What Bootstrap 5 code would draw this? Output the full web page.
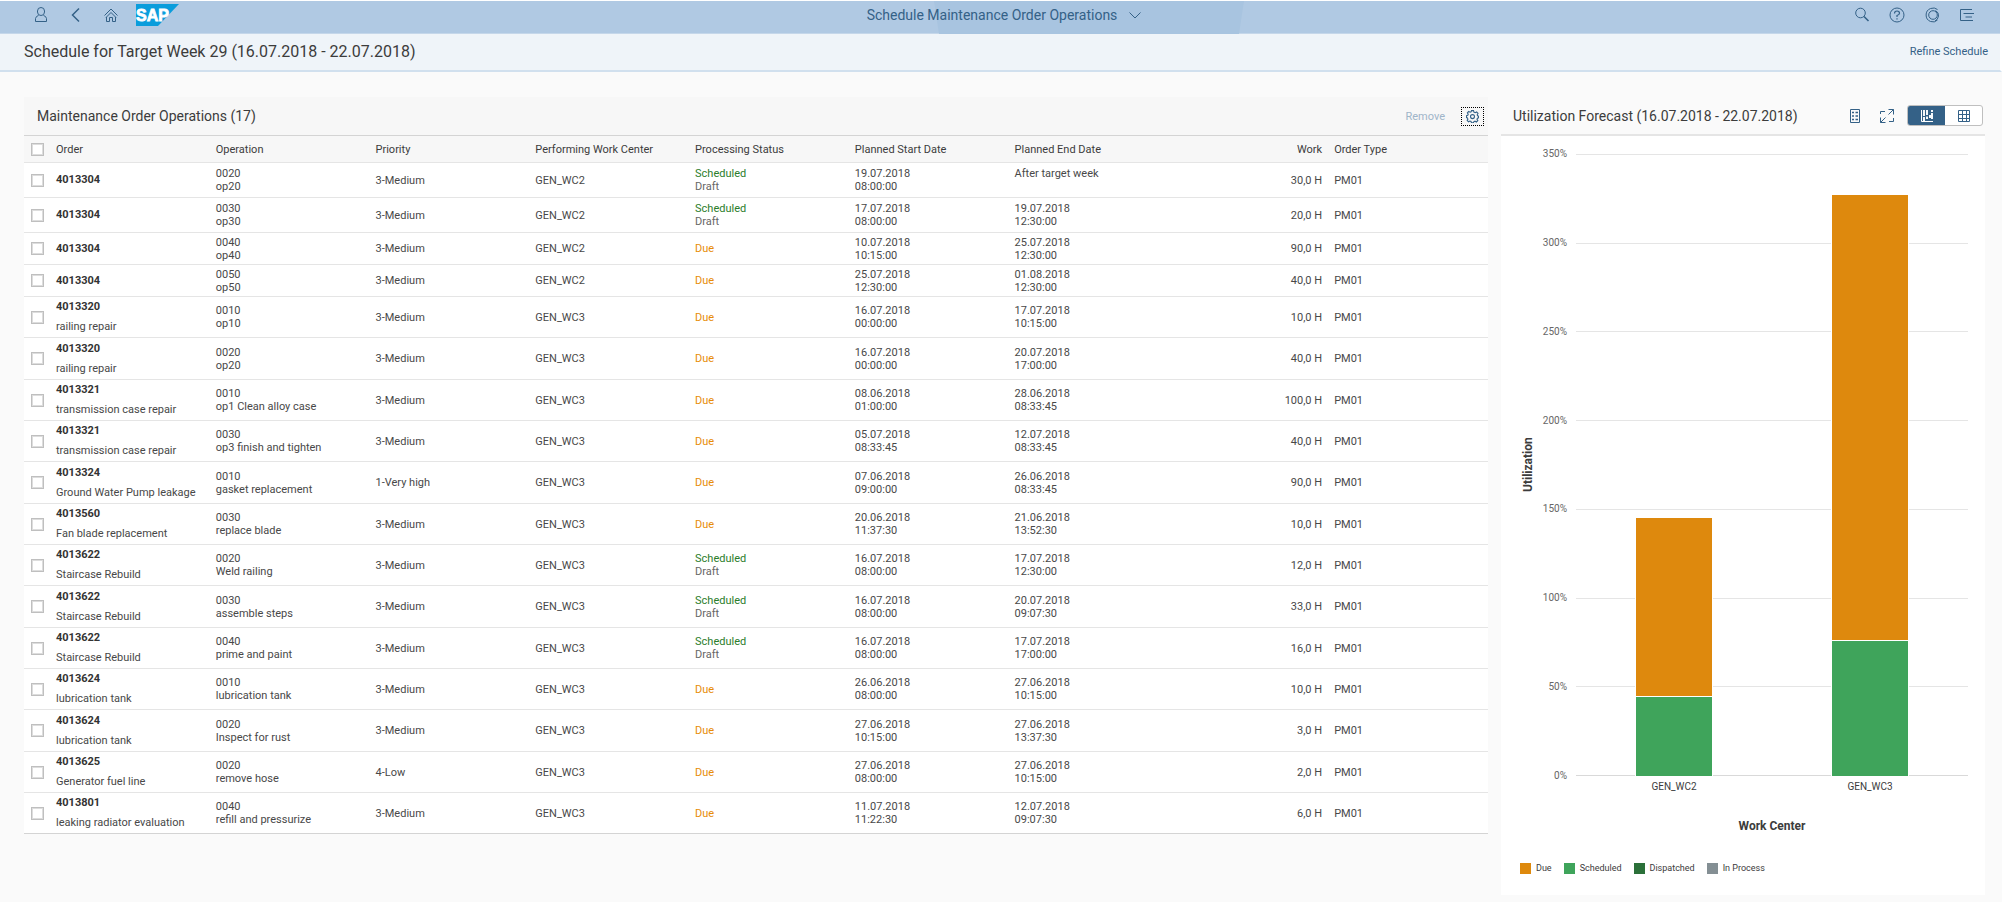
<!DOCTYPE html>
<html lang="en">
<head>
<meta charset="utf-8">
<meta name="viewport" content="width=device-width, initial-scale=1">
<title>Schedule Maintenance Order Operations</title>
<link href="https://cdn.jsdelivr.net/npm/bootstrap@5.3.0/dist/css/bootstrap.min.css" rel="stylesheet">
<style>
  :root { --brand: #346187; --ink: #3c3c3c; --line: #e5e5e5; --due: #de890d; --sched: #3fa45b; --disp: #2b7039; --proc: #848f94; }
  body { font-family: Roboto, "Open Sans", sans-serif; font-size: 11px; line-height: 13px; color: var(--ink); background: #fafafa; }
  button { font: inherit; color: inherit; border: 0; background: none; padding: 0; }
  svg { display: block; }
  .shell { height: 34px; padding: 0 24px 5px 32px; background: #b0c9e3; border: solid #fff; border-width: 1px 2px 0 0; box-shadow: inset 0 -1px #c5d7ea; color: var(--brand); }
  .shell-side { flex: 1 1 0; }
  .tools-start { gap: 20px; }
  .tools-end { gap: 17px; }
  .shell-shape { top: 0; left: 46.7%; width: 310px; height: 100%; background: #a8c4e0; clip-path: polygon(0 0, 100% 0, 305px 100%, 5px 100%); }
  .shell-title { font-size: 14px; line-height: 20px; gap: 12px; }
  .page-head { height: 38px; padding: 0 12px 0 24px; background: #eff4f9; border-bottom: 2px solid #d1e0ee; border-right: 2px solid #fff; }
  .page-head h1 { font-size: 16px; line-height: 20px; font-weight: 400; }
  .page-head a { font-size: 11px; line-height: 16px; color: var(--brand); }
  main { padding: 25px 17px 7px 24px; gap: 13px; }
  h2 { font-size: 14px; line-height: 20px; font-weight: 400; }
  .ops { flex: 1464 1 0; }
  .util { flex: 484 1 0; }
  .ops-bar { height: 39px; padding: 0 4px 0 13px; background: #f7f7f7; border-bottom: 1px solid #d4d4d4; }
  .off { color: #9fb5c9; }
  .gear { border: 1px dotted #000; padding: 2px 4px; color: var(--brand); }
  .ops-table { table-layout: fixed; width: 100%; background: #fff; border-collapse: separate; border-spacing: 0; }
  .ops-table th { font-weight: 400; height: 27px; background: #f7f7f7; }
  .ops-table th, .ops-table td { padding: 0 6px; border-bottom: 1px solid var(--line); vertical-align: middle; white-space: nowrap; }
  .ops-table td { height: 41px; color: #484848; }
  .ops-table tr:nth-child(3n) td { height: 42px; }
  .ops-table tr.tall td { height: 35px; }
  .ops-table tr.flat td { height: 32px; }
  .ops-table tr:last-child td { border-bottom-color: #d4d4d4; }
  .ops-table .pick-col { width: 26px; }
  .pick { appearance: none; display: block; width: 13px; height: 13px; margin: 0 0 0 1px; border: 1px solid #bfbfbf; box-shadow: inset 0 0 0 1px #ddd; background: #fff; border-radius: 0; }
  .pick:checked { background: var(--brand); }
  .ops-table b { display: block; line-height: 20px; color: #333; }
  .note { display: block; line-height: 20px; }
  .draft { color: #666; }
  .is-sched { color: #2b7d2b; }
  .is-due { color: #e78c07; }
  .util-bar { height: 39px; padding: 0 2px 0 12px; border-bottom: 2px solid #e5e5e5; }
  .util-tools { color: var(--brand); gap: 20px; }
  .seg { width: 76px; height: 21px; border: 1px solid #bfbfbf; border-radius: 3px; overflow: hidden; margin-left: -7px; background: #fff; }
  .seg button { flex: 1 1 0; display: flex; align-items: center; justify-content: center; }
  .seg .on { background: var(--brand); color: #fff; }
  .chart { background: #fff; padding: 18px 17px 21px 19px; font-size: 10px; line-height: 12px; }
  .axis-name { font-size: 12px; line-height: 16px; font-weight: 700; }
  .y-name { writing-mode: vertical-rl; transform: rotate(180deg); text-align: center; }
  .y-ticks { width: 31px; margin: -6px 9px -6px 0; color: #666; text-align: right; }
  .plot { display: grid; }
  .plot > * { grid-area: 1 / 1; }
  .grid-lines > div { flex: 1 1 0; border-top: 1px solid var(--line); }
  .grid-lines > div:last-child { border-bottom: 1px solid #d9d9d9; }
  .stack { width: 40%; }
  .stack > div { border: solid #fff; border-width: 1px 1px 0; }
  .x-part { margin-left: 56px; }
  .x-ticks { margin-top: 5px; }
  .x-name { margin-top: 25px; }
  .legend-row { margin-top: 28px; gap: 12px; font-size: 9px; line-height: 12px; }
  .key { width: 11px; height: 11px; margin-right: 5px; }
  .c-due { background: var(--due); } .c-sched { background: var(--sched); } .c-disp { background: var(--disp); } .c-proc { background: var(--proc); }
</style>
</head>
<body class="d-flex flex-column min-vh-100">
<header class="shell position-relative d-flex align-items-center">
  <div class="shell-shape position-absolute"></div>
  <div class="shell-side tools-start d-flex align-items-center position-relative">
    <button type="button" aria-label="User"><svg width="18" height="18" viewBox="0 0 18 18" fill="none" stroke="currentColor"><rect x="5.500" y="1.500" width="7" height="8" rx="3.500"/><path d="M6.500 9.500Q4 10 3.500 12.500V15.500H14.500V12.500Q14 10 11.500 9.500"/></svg></button>
    <button type="button" aria-label="Back"><svg width="12" height="18" viewBox="0 0 12 18" fill="none" stroke="currentColor" stroke-width="1.500"><path d="M9 2.500L2.500 9L9 15.500"/></svg></button>
    <div class="d-flex align-items-center gap-3">
      <button type="button" aria-label="Home"><svg width="18" height="18" viewBox="0 0 18 18" fill="none" stroke="currentColor"><path d="M2.500 9.500L9 3L15.500 9.500M4.500 11V15.500H7.500V11.500H10.500V15.500H13.500V11M4 11.500L9 6.500L14 11.500"/></svg></button>
      <svg width="43" height="22" viewBox="0 0 43 22" role="img" aria-label="SAP"><path d="M0 0H43L22 22H0Z" fill="#0a9ddc"/><text x="0" y="17" font-family="Liberation Sans, sans-serif" font-size="16" font-weight="700" fill="#fff" stroke="#fff" stroke-width=".8">SAP</text></svg>
    </div>
  </div>
  <button type="button" class="shell-title d-flex align-items-center position-relative">Schedule Maintenance Order Operations <svg width="12" height="8" viewBox="0 0 12 8" fill="none" stroke="currentColor"><path d="M.5 1.500L6 7L11.500 1.500"/></svg></button>
  <div class="shell-side tools-end d-flex align-items-center justify-content-end position-relative">
    <button type="button" aria-label="Search"><svg width="18" height="18" viewBox="0 0 18 18" fill="none" stroke="currentColor"><circle cx="7.500" cy="7" r="4.800"/><path d="M11 10.500L15.500 15" stroke-width="1.600"/></svg></button>
    <button type="button" aria-label="Help"><svg width="18" height="18" viewBox="0 0 18 18" fill="none" stroke="currentColor"><circle cx="9" cy="9" r="7"/><path d="M6.500 7.500Q6.500 5 9 5T11.500 7.200Q11.500 8.500 9 9.500V11M9 12.200V13.500" stroke-width="1.200"/></svg></button>
    <button type="button" aria-label="Assistant"><svg width="18" height="18" viewBox="0 0 18 18" fill="none" stroke="currentColor"><path d="M14.500 3.500Q11.500 1 7.500 2.500A7 7 0 0 0 7.500 15.500Q11.500 17 14.500 14"/><circle cx="10" cy="9" r="4.300"/><path d="M12.500 4.500Q16 6.500 15.500 10T12 15"/></svg></button>
    <button type="button" aria-label="Notifications"><svg width="18" height="18" viewBox="0 0 18 18" fill="none" stroke="currentColor"><path d="M14 3.500H2.500V14.500H15M5.500 7.500H16M7.500 11H14"/></svg></button>
  </div>
</header>
<section class="page-head d-flex align-items-center justify-content-between">
  <h1 class="m-0">Schedule for Target Week 29 (16.07.2018 - 22.07.2018)</h1>
  <a href="#" class="text-decoration-none">Refine Schedule</a>
</section>
<main class="d-flex flex-grow-1">
  <section class="ops align-self-start">
    <div class="ops-bar d-flex align-items-center">
      <h2 class="m-0 me-auto">Maintenance Order Operations (17)</h2>
      <button type="button" class="off me-3" disabled>Remove</button>
      <button type="button" class="gear" aria-label="Settings"><svg width="13" height="13" viewBox="0 0 13 13" fill="none" stroke="currentColor" stroke-width="1.100"><path d="M5.500 .6h2l.4 1.500 1.300.6L10.600 2 12 3.400l-.8 1.400.4 1 1 .4v1.600l-1.100.3-.5 1.200.8 1.300-1.400 1.400-1.400-.8-1.100.4-.4 1.100h-2L5 11.500l-1-.5-1.500.8-1.300-1.400.7-1.300-.5-1.200L.5 7.600V5.700l1.200-.4.5-1.100-.8-1.400 1.300-1.300 1.400.7 1-.4z"/><circle cx="6.500" cy="6.600" r="2"/></svg></button>
    </div>
    <table class="ops-table">
      <thead><tr><th class="pick-col"><input type="checkbox" class="pick" aria-label="Select all"></th><th>Order</th><th>Operation</th><th>Priority</th><th>Performing Work Center</th><th>Processing Status</th><th>Planned Start Date</th><th>Planned End Date</th><th class="text-end">Work</th><th>Order Type</th></tr></thead>
      <tbody>
        <tr class="tall"><td><input type="checkbox" class="pick" aria-label="Select 4013304 0020"></td><td><b>4013304</b></td><td>0020<br>op20</td><td>3-Medium</td><td>GEN_WC2</td><td><span class="is-sched">Scheduled</span><br><span class="draft">Draft</span></td><td>19.07.2018<br>08:00:00</td><td>After target week<br>&nbsp;</td><td class="text-end">30,0 H</td><td>PM01</td></tr>
        <tr class="tall"><td><input type="checkbox" class="pick" aria-label="Select 4013304 0030"></td><td><b>4013304</b></td><td>0030<br>op30</td><td>3-Medium</td><td>GEN_WC2</td><td><span class="is-sched">Scheduled</span><br><span class="draft">Draft</span></td><td>17.07.2018<br>08:00:00</td><td>19.07.2018<br>12:30:00</td><td class="text-end">20,0 H</td><td>PM01</td></tr>
        <tr class="flat"><td><input type="checkbox" class="pick" aria-label="Select 4013304 0040"></td><td><b>4013304</b></td><td>0040<br>op40</td><td>3-Medium</td><td>GEN_WC2</td><td><span class="is-due">Due</span></td><td>10.07.2018<br>10:15:00</td><td>25.07.2018<br>12:30:00</td><td class="text-end">90,0 H</td><td>PM01</td></tr>
        <tr class="flat"><td><input type="checkbox" class="pick" aria-label="Select 4013304 0050"></td><td><b>4013304</b></td><td>0050<br>op50</td><td>3-Medium</td><td>GEN_WC2</td><td><span class="is-due">Due</span></td><td>25.07.2018<br>12:30:00</td><td>01.08.2018<br>12:30:00</td><td class="text-end">40,0 H</td><td>PM01</td></tr>
        <tr><td><input type="checkbox" class="pick" aria-label="Select 4013320 0010"></td><td><b>4013320</b><span class="note">railing repair</span></td><td>0010<br>op10</td><td>3-Medium</td><td>GEN_WC3</td><td><span class="is-due">Due</span></td><td>16.07.2018<br>00:00:00</td><td>17.07.2018<br>10:15:00</td><td class="text-end">10,0 H</td><td>PM01</td></tr>
        <tr><td><input type="checkbox" class="pick" aria-label="Select 4013320 0020"></td><td><b>4013320</b><span class="note">railing repair</span></td><td>0020<br>op20</td><td>3-Medium</td><td>GEN_WC3</td><td><span class="is-due">Due</span></td><td>16.07.2018<br>00:00:00</td><td>20.07.2018<br>17:00:00</td><td class="text-end">40,0 H</td><td>PM01</td></tr>
        <tr><td><input type="checkbox" class="pick" aria-label="Select 4013321 0010"></td><td><b>4013321</b><span class="note">transmission case repair</span></td><td>0010<br>op1 Clean alloy case</td><td>3-Medium</td><td>GEN_WC3</td><td><span class="is-due">Due</span></td><td>08.06.2018<br>01:00:00</td><td>28.06.2018<br>08:33:45</td><td class="text-end">100,0 H</td><td>PM01</td></tr>
        <tr><td><input type="checkbox" class="pick" aria-label="Select 4013321 0030"></td><td><b>4013321</b><span class="note">transmission case repair</span></td><td>0030<br>op3 finish and tighten</td><td>3-Medium</td><td>GEN_WC3</td><td><span class="is-due">Due</span></td><td>05.07.2018<br>08:33:45</td><td>12.07.2018<br>08:33:45</td><td class="text-end">40,0 H</td><td>PM01</td></tr>
        <tr><td><input type="checkbox" class="pick" aria-label="Select 4013324 0010"></td><td><b>4013324</b><span class="note">Ground Water Pump leakage</span></td><td>0010<br>gasket replacement</td><td>1-Very high</td><td>GEN_WC3</td><td><span class="is-due">Due</span></td><td>07.06.2018<br>09:00:00</td><td>26.06.2018<br>08:33:45</td><td class="text-end">90,0 H</td><td>PM01</td></tr>
        <tr><td><input type="checkbox" class="pick" aria-label="Select 4013560 0030"></td><td><b>4013560</b><span class="note">Fan blade replacement</span></td><td>0030<br>replace blade</td><td>3-Medium</td><td>GEN_WC3</td><td><span class="is-due">Due</span></td><td>20.06.2018<br>11:37:30</td><td>21.06.2018<br>13:52:30</td><td class="text-end">10,0 H</td><td>PM01</td></tr>
        <tr><td><input type="checkbox" class="pick" aria-label="Select 4013622 0020"></td><td><b>4013622</b><span class="note">Staircase Rebuild</span></td><td>0020<br>Weld railing</td><td>3-Medium</td><td>GEN_WC3</td><td><span class="is-sched">Scheduled</span><br><span class="draft">Draft</span></td><td>16.07.2018<br>08:00:00</td><td>17.07.2018<br>12:30:00</td><td class="text-end">12,0 H</td><td>PM01</td></tr>
        <tr><td><input type="checkbox" class="pick" aria-label="Select 4013622 0030"></td><td><b>4013622</b><span class="note">Staircase Rebuild</span></td><td>0030<br>assemble steps</td><td>3-Medium</td><td>GEN_WC3</td><td><span class="is-sched">Scheduled</span><br><span class="draft">Draft</span></td><td>16.07.2018<br>08:00:00</td><td>20.07.2018<br>09:07:30</td><td class="text-end">33,0 H</td><td>PM01</td></tr>
        <tr><td><input type="checkbox" class="pick" aria-label="Select 4013622 0040"></td><td><b>4013622</b><span class="note">Staircase Rebuild</span></td><td>0040<br>prime and paint</td><td>3-Medium</td><td>GEN_WC3</td><td><span class="is-sched">Scheduled</span><br><span class="draft">Draft</span></td><td>16.07.2018<br>08:00:00</td><td>17.07.2018<br>17:00:00</td><td class="text-end">16,0 H</td><td>PM01</td></tr>
        <tr><td><input type="checkbox" class="pick" aria-label="Select 4013624 0010"></td><td><b>4013624</b><span class="note">lubrication tank</span></td><td>0010<br>lubrication tank</td><td>3-Medium</td><td>GEN_WC3</td><td><span class="is-due">Due</span></td><td>26.06.2018<br>08:00:00</td><td>27.06.2018<br>10:15:00</td><td class="text-end">10,0 H</td><td>PM01</td></tr>
        <tr><td><input type="checkbox" class="pick" aria-label="Select 4013624 0020"></td><td><b>4013624</b><span class="note">lubrication tank</span></td><td>0020<br>Inspect for rust</td><td>3-Medium</td><td>GEN_WC3</td><td><span class="is-due">Due</span></td><td>27.06.2018<br>10:15:00</td><td>27.06.2018<br>13:37:30</td><td class="text-end">3,0 H</td><td>PM01</td></tr>
        <tr><td><input type="checkbox" class="pick" aria-label="Select 4013625 0020"></td><td><b>4013625</b><span class="note">Generator fuel line</span></td><td>0020<br>remove hose</td><td>4-Low</td><td>GEN_WC3</td><td><span class="is-due">Due</span></td><td>27.06.2018<br>08:00:00</td><td>27.06.2018<br>10:15:00</td><td class="text-end">2,0 H</td><td>PM01</td></tr>
        <tr><td><input type="checkbox" class="pick" aria-label="Select 4013801 0040"></td><td><b>4013801</b><span class="note">leaking radiator evaluation</span></td><td>0040<br>refill and pressurize</td><td>3-Medium</td><td>GEN_WC3</td><td><span class="is-due">Due</span></td><td>11.07.2018<br>11:22:30</td><td>12.07.2018<br>09:07:30</td><td class="text-end">6,0 H</td><td>PM01</td></tr>
      </tbody>
    </table>
  </section>
  <section class="util d-flex flex-column">
    <div class="util-bar d-flex align-items-center">
      <h2 class="m-0 me-auto">Utilization Forecast (16.07.2018 - 22.07.2018)</h2>
      <div class="util-tools d-flex align-items-center">
        <button type="button" aria-label="Legend"><svg width="10" height="14" viewBox="0 0 10 14" fill="none" stroke="currentColor"><path d="M.5 .5H9.500V13.500H.5Z"/><path d="M2 3.500H4M5.500 3.500H8M2 7H4M5.500 7H8M2 10.500H4M5.500 10.500H8" stroke-width="1.500"/></svg></button>
        <button type="button" aria-label="Full screen"><svg width="14" height="14" viewBox="0 0 14 14" fill="none" stroke="currentColor"><path d="M8.500 .5H13.500V5.500M13.500 .5L8.500 5.500M.5 8.500V13.500H5.500M.5 13.500L5.500 8.500M.5 5V2.500H5M13.500 9V12.500H9"/></svg></button>
        <div class="seg d-flex">
          <button type="button" class="on" aria-label="Chart view"><svg width="12" height="12" viewBox="0 0 12 12" fill="none" stroke="currentColor"><path d="M.5 0V11.500H12"/><path d="M3 0V6M3 7V11M6 0V5M6 6.500V9M9 5V8M11 0V2M11 3V9" stroke-width="1.900"/></svg></button>
          <button type="button" aria-label="Table view"><svg width="12" height="12" viewBox="0 0 12 12" fill="none" stroke="currentColor"><path d="M.5 .5H11.500V11.500H.5ZM.5 4.500H11.500M.5 8.500H11.500M4.500 .5V11.500M8.500 .5V11.500"/></svg></button>
        </div>
      </div>
    </div>
    <div class="chart d-flex flex-column flex-grow-1">
      <div class="d-flex flex-grow-1">
        <div class="y-name axis-name">Utilization</div>
        <div class="y-ticks d-flex flex-column justify-content-between"><span>350%</span><span>300%</span><span>250%</span><span>200%</span><span>150%</span><span>100%</span><span>50%</span><span>0%</span></div>
        <div class="plot flex-grow-1">
          <div class="grid-lines d-flex flex-column"><div></div><div></div><div></div><div></div><div></div><div></div><div></div></div>
          <div class="d-flex">
            <div class="w-50 d-flex justify-content-center"><div class="stack d-flex flex-column justify-content-end"><div class="c-due" style="height:28.71%"></div><div class="c-sched" style="height:12.86%"></div></div></div>
            <div class="w-50 d-flex justify-content-center"><div class="stack d-flex flex-column justify-content-end"><div class="c-due" style="height:71.71%"></div><div class="c-sched" style="height:21.79%"></div></div></div>
          </div>
        </div>
      </div>
      <div class="x-part text-center">
        <div class="x-ticks d-flex"><span class="w-50">GEN_WC2</span><span class="w-50">GEN_WC3</span></div>
        <div class="x-name axis-name">Work Center</div>
      </div>
      <div class="legend-row d-flex">
        <span class="d-flex align-items-center"><i class="key c-due"></i>Due</span>
        <span class="d-flex align-items-center"><i class="key c-sched"></i>Scheduled</span>
        <span class="d-flex align-items-center"><i class="key c-disp"></i>Dispatched</span>
        <span class="d-flex align-items-center"><i class="key c-proc"></i>In Process</span>
      </div>
    </div>
  </section>
</main>
<script src="https://cdn.jsdelivr.net/npm/bootstrap@5.3.0/dist/js/bootstrap.bundle.min.js"></script>
</body>
</html>
